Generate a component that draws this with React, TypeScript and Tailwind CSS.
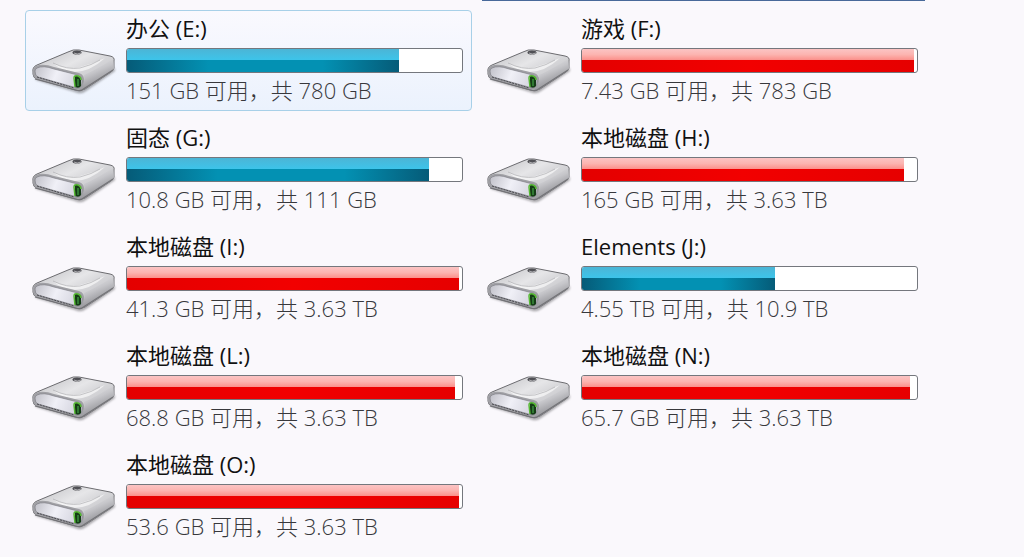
import { useState } from "react";

type Drive = { id: string; label: string; free: string; total: string; used: number; low?: boolean };

const DRIVES: Drive[] = [
	{ id: "E", label: "办公", free: "151 GB", total: "780 GB", used: 81.5 },
	{ id: "F", label: "游戏", free: "7.43 GB", total: "783 GB", used: 99.3, low: true },
	{ id: "G", label: "固态", free: "10.8 GB", total: "111 GB", used: 90.5 },
	{ id: "H", label: "本地磁盘", free: "165 GB", total: "3.63 TB", used: 96.3, low: true },
	{ id: "I", label: "本地磁盘", free: "41.3 GB", total: "3.63 TB", used: 99.3, low: true },
	{ id: "J", label: "Elements", free: "4.55 TB", total: "10.9 TB", used: 57.8 },
	{ id: "L", label: "本地磁盘", free: "68.8 GB", total: "3.63 TB", used: 98.3, low: true },
	{ id: "N", label: "本地磁盘", free: "65.7 GB", total: "3.63 TB", used: 98.3, low: true },
	{ id: "O", label: "本地磁盘", free: "53.6 GB", total: "3.63 TB", used: 99.3, low: true },
];

/**
 * External hard drive seen from the front left, with a green activity light.
 */
function DriveIcon(): JSX.Element {
	return (
		<svg viewBox="0 0 88 50" className="h-[50px] w-[88px] shrink-0" aria-hidden="true">
			<defs>
				<linearGradient id="drive-top" x1="0" y1="0" x2="1" y2="1">
					<stop offset="0" stopColor="#bcbcc0" />
					<stop offset="0.4" stopColor="#e6e6e8" />
					<stop offset="0.55" stopColor="#d6d6d9" />
					<stop offset="1" stopColor="#b4b4b8" />
				</linearGradient>
				<linearGradient id="drive-front" x1="0" y1="0" x2="1" y2="0.2">
					<stop offset="0" stopColor="#c0c0c8" />
					<stop offset="0.5" stopColor="#f0f0f7" />
					<stop offset="1" stopColor="#d5d5df" />
				</linearGradient>
				<linearGradient id="drive-side" x1="0" y1="0" x2="0.5" y2="1">
					<stop offset="0" stopColor="#f3f3f4" />
					<stop offset="0.5" stopColor="#c6c6ca" />
					<stop offset="1" stopColor="#808085" />
				</linearGradient>
				<filter id="drive-shadow" x="-10%" y="-20%" width="120%" height="150%">
					<feGaussianBlur stdDeviation="1" />
				</filter>
			</defs>
			<path d="M5 31 L47 44 Q51 45 55 42 L85 22 L85 25 L56 45 Q51 49 45 46 L6 34 Z" fill="#555558" opacity="0.5" filter="url(#drive-shadow)" />
			<path d="M3 26 Q2 21 7 19 L38 6 Q43 3 49 4 L80 10 Q85 11 84 15 L84 22 Q84 24 81 26 L55 43 Q50 46 45 44 L7 33 Q3 32 3 28 Z" fill="url(#drive-top)" stroke="#6c6c70" />
			<path d="M54 29 Q64 25 83 13 L84 22 Q84 24 81 26 L55 43 Q51 45 49 44 Q56 38 54 29 Z" fill="url(#drive-side)" />
			<path d="M23 17 Q37 24 50 21 Q62 18 75 12 Q60 26 44 26 Q32 25 23 17 Z" fill="#ffffff" opacity="0.6" />
			<path d="M23 17 Q37 24 50 22 Q62 19 70 14" fill="none" stroke="#a5a5a8" strokeWidth="0.6" />
			<path d="M6 20 Q13 17 24 21 L49 27 Q55 29 54 36 Q53 44 48 44 L7 33 Q3 32 3 26 Q3 21 6 20 Z" fill="#a0a0a5" />
			<path d="M7 22 Q13 19 24 23 L48 29 Q52 30 52 35 Q52 42 47 42 L8 31 Q5 30 5 25 Q5 23 7 22 Z" fill="url(#drive-front)" stroke="#808086" strokeWidth="0.7" />
			<path d="M7 31 L44 42" stroke="#4b4b50" strokeDasharray="2 1" />
			<path d="M5 33 L46 44 Q50 46 55 42 L83 24" fill="none" stroke="#737377" strokeWidth="1.2" />
			<path d="M45 30 Q50 29 51 33 L51 40 Q49 43 45 41 Z" fill="#153c16" />
			<path d="M45 41 L44 32 Q44 29 48 30 Q51 31 51 34" fill="none" stroke="#55b832" strokeWidth="1.5" />
			<path d="M48 33 L48 40" stroke="#37883a" strokeWidth="1.6" />
			<ellipse cx="47" cy="6.5" rx="4.5" ry="2" fill="#505055" />
			<path d="M44 7 Q47 9 51 7" fill="none" stroke="#d5d5d9" strokeWidth="0.7" />
		</svg>
	);
}

function CapacityBar({ drive }: { drive: Drive }): JSX.Element {
	return (
		<span
			role="meter"
			aria-label={`${drive.id}:`}
			aria-valuemin={0}
			aria-valuemax={100}
			aria-valuenow={drive.used}
			className="block h-[25px] rounded-[3px] border border-[#74777d] bg-white pr-px"
		>
			<span className="flex h-full flex-col overflow-hidden rounded-l-[2px]" style={{ width: `${drive.used}%` }}>
				<span
					className={`block h-[11px] ${
						drive.low
							? "bg-linear-to-b from-[#fbc4c4] via-[#fcb4b0] to-[#fb8f8a]"
							: "bg-linear-to-b from-[#4bb5d6] to-[#3cc4ea]"
					}`}
				/>
				<span
					className={`block flex-1 ${
						drive.low
							? "bg-linear-to-r from-[#e40000] via-[#f20000] to-[#e60000]"
							: "bg-[linear-gradient(90deg,#055b78,#0391b3_30%,#0391b3_72%,#055b78)]"
					}`}
				/>
			</span>
		</span>
	);
}

function DriveTile(props: { drive: Drive; selected: boolean; onSelect: () => void }): JSX.Element {
	const { drive, selected, onSelect } = props;

	return (
		<button
			type="button"
			aria-pressed={selected}
			onClick={onSelect}
			className={`flex w-full items-center gap-2 rounded-[4px] border py-1 pr-2 pl-1 text-left ${
				selected ? "border-[#a8d0e8] bg-linear-to-b from-[#faf9fe] to-[#ebf2fd]" : "border-transparent"
			}`}
		>
			<span className="pt-5">
				<DriveIcon />
			</span>
			<span className="block min-w-0 flex-1">
				<span className="block pb-[7px] text-[22px] leading-[26px] whitespace-nowrap text-[#111111]">
					{drive.label} ({drive.id}:)
				</span>
				<CapacityBar drive={drive} />
				<span className="block pt-1 pb-[3px] text-[22px] leading-[26px] font-light whitespace-nowrap text-[#38383c]">
					{drive.free} 可用，共 {drive.total}
				</span>
			</span>
		</button>
	);
}

export default function App(): JSX.Element {
	const [selected, setSelected] = useState("E");

	return (
		<main
			lang="zh-CN"
			className="min-h-screen bg-[#faf8fc] pr-[97px] pl-[25px] font-['Open_Sans','Noto_Sans_CJK_SC',sans-serif]"
		>
			<div className="grid grid-cols-2 gap-2">
				<div className="col-start-2 mx-0.5 h-px bg-[#48699a]" />
			</div>
			<ul className="grid grid-cols-2 gap-x-2 gap-y-2 pt-[9px]">
				{DRIVES.map((drive) => (
					<li key={drive.id}>
						<DriveTile drive={drive} selected={selected === drive.id} onSelect={() => setSelected(drive.id)} />
					</li>
				))}
			</ul>
		</main>
	);
}
